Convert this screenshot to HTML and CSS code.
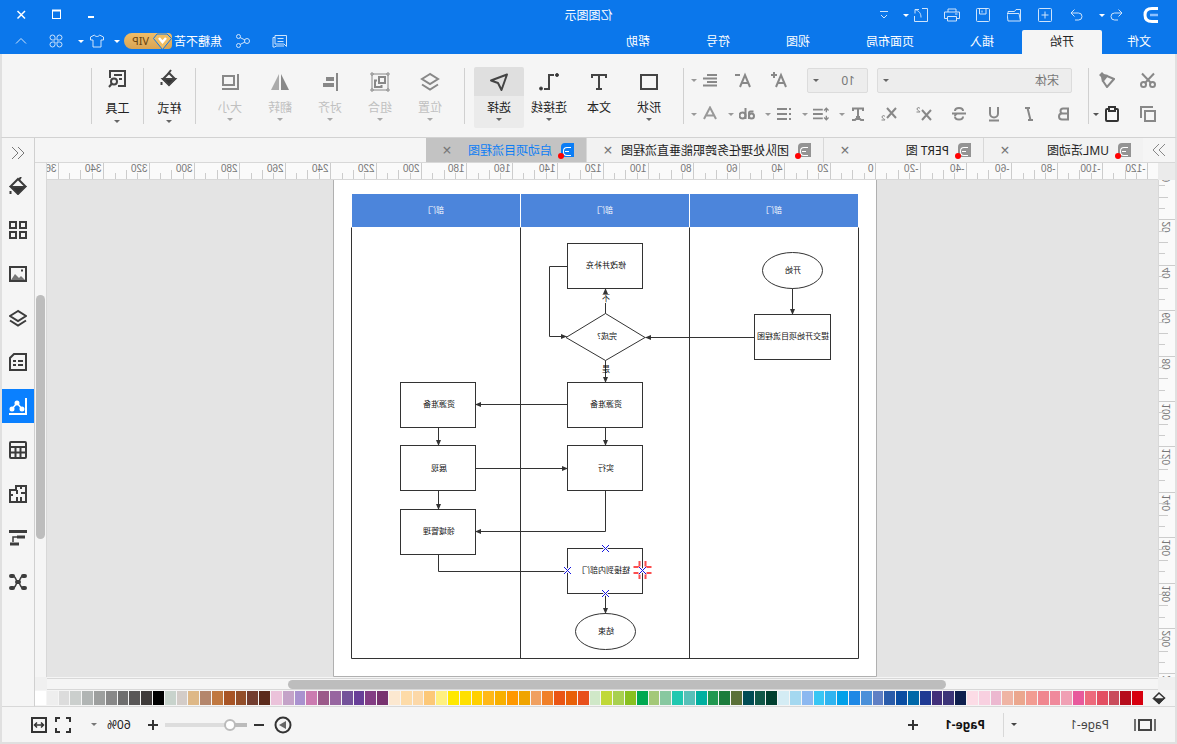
FILE: index.html
```
<!DOCTYPE html>
<html lang="zh-CN">
<head>
<meta charset="utf-8">
<title>亿图图示</title>
<link rel="stylesheet" href="styles.css">
</head>
<body>
<div class="app">
  <header class="header">
    <div class="titlebar">
      <div class="quick">
        <svg class="logo" width="18" height="18" viewBox="0 0 18 18" fill="none" stroke="#fff" stroke-width="3"><path d="M2 2.500h6c5 0 7 2 7 6.500s-2 6.500-7 6.500H2"/><path d="M2 9h8" stroke="#8cc0ff" stroke-width="2.500"/></svg>
        <button class="split" aria-label="撤销"><svg class="ic" viewBox="0 0 14 14"><path d="M5.500 1.500 2 5l3.500 3.500M2 5h7.500a3.500 3.500 0 0 1 0 7H6"/></svg><i class="caret"></i></button>
        <button class="qbtn" aria-label="重做"><svg class="ic" viewBox="0 0 14 14"><path d="M8.500 1.500 12 5 8.500 8.500M12 5H4.500a3.500 3.500 0 0 0 0 7H8"/></svg></button>
        <button class="qbtn" aria-label="新建"><svg class="ic" viewBox="0 0 14 14"><rect x=".5" y=".5" width="13" height="13" rx="1"/><path d="M7 3.500v7M3.500 7h7"/></svg></button>
        <button class="qbtn" aria-label="打开"><svg class="ic" viewBox="0 0 14 14"><path d="M.500 13V1.500h4.500l1.500 2H13V6M.500 13 2 5.500h12L13 13z"/></svg></button>
        <button class="qbtn" aria-label="保存"><svg class="ic" viewBox="0 0 14 14"><rect x=".5" y=".5" width="13" height="13" rx="1"/><path d="M4 1v5h6.500V1M8 2.500v2"/></svg></button>
        <button class="qbtn" aria-label="打印"><svg class="ic print" viewBox="0 0 16 14"><path d="M4 4V1h8v3M3.500 10.500H.500V4h15v6.500h-3"/><path d="M3.500 8.500h9V13h-9zM2.500 6H5"/></svg></button>
        <button class="split" aria-label="导出"><svg class="ic" viewBox="0 0 14 14"><path d="M6 .5H.500v13h13V8"/><path d="M9 1.500h4v4M13 1.500C9 3 7 5 7 9.500"/></svg><i class="caret"></i></button>
        <button class="more" aria-label="更多"><svg class="ic" width="8" height="8" viewBox="0 0 8 8"><path d="M0 .5h8M1 4l3 3 3-3"/></svg></button>
      </div>
      <h1 class="title">亿图图示</h1>
      <div class="winbtns">
        <button class="wbtn" aria-label="最小化"><svg class="ic win" viewBox="0 0 14 14"><path d="M4 9h6" stroke-width="2"/></svg></button>
        <button class="wbtn" aria-label="最大化"><svg class="ic win" viewBox="0 0 14 14"><rect x="2.500" y="2.500" width="8" height="8"/><path d="M2 2.500h9" stroke-width="2"/></svg></button>
        <button class="wbtn" aria-label="关闭"><svg class="ic win" viewBox="0 0 14 14"><path d="m3 3 7.500 7.500m0-7.500L3 10.500" stroke-width="1.500"/></svg></button>
      </div>
    </div>
    <div class="menubar">
      <nav class="menus">
        <button class="menu first">文件</button><button class="menu active">开始</button><button class="menu">插入</button><button class="menu">页面布局</button><button class="menu">视图</button><button class="menu">符号</button><button class="menu">帮助</button>
      </nav>
      <div class="account">
        <button class="abtn msg" aria-label="消息"><svg class="ic" width="16" height="14" viewBox="1 0 16 14"><path d="M2.500 1.500h11.500v8.500H5l-2.500 2.500zM14 3.500h2v9.500h-2l-1-1H5M5.500 4.500h6M5.500 7.500h6"/></svg></button>
        <button class="abtn share" aria-label="分享"><svg class="ic" viewBox="0 0 14 14"><circle cx="3" cy="7" r="2.500"/><circle cx="11.500" cy="2.500" r="2"/><circle cx="11.500" cy="11.500" r="2"/><path d="m5 6 5-2.500M5 8l5 2.500"/></svg></button>
        <span class="user">焦糖不苦</span>
        <button class="vip"><svg width="19" height="17" viewBox="0 0 19 17"><path d="M5 1h10l3.500 4.500L9.500 16.500.500 5.500z" fill="#f0bd62" stroke="#0b77eb"/><path d="m6 5 3.500 4L13 5" fill="none" stroke="#fff" stroke-width="2.500"/></svg><span>VIP</span></button>
        <i class="caret acc"></i>
        <button class="abtn skin" aria-label="皮肤"><svg class="ic" viewBox="0 0 14 14"><path d="M4.500 1C5 3 9 3 9.500 1L13.500 3v3h-2.500v7H3V6H.500V3z"/></svg><i class="caret"></i></button>
        <button class="wbtn" aria-label="应用"><svg class="ic" viewBox="0 0 14 14"><path d="M6 6H3.500a2.500 2.500 0 1 1 2.500-2.500zm2 0V3.500A2.500 2.500 0 1 1 10.500 6zM6 8v2.500A2.500 2.500 0 1 1 3.500 8zm2 0h2.500A2.500 2.500 0 1 1 8 10.500z"/></svg></button>
        <button class="wbtn" aria-label="收起"><svg class="ic" viewBox="0 0 14 14"><path d="m2 9.500 5-5 5 5"/></svg></button>
      </div>
    </div>
  </header>

  <section class="ribbon">
    <div class="clip">
      <button class="tool" aria-label="剪切"><svg class="ri" viewBox="0 0 16 16"><circle cx="3.500" cy="12.500" r="2.500"/><circle cx="12.500" cy="12.500" r="2.500"/><path d="M2 1.500 11 11M14 1.500 5 11"/></svg></button>
      <button class="tool" aria-label="格式刷"><svg class="ri" viewBox="0 0 16 16"><path d="M1 7 8 4l4 5-4 6z"/><path d="m7 3 4-1 2-2 3 3-2 2-1 5z" fill="#888" stroke="none"/></svg></button>
      <button class="tool" aria-label="复制"><svg class="ri" viewBox="0 0 16 16"><rect x="1" y="5" width="10" height="10"/><path d="M3 1h12v11" /></svg></button>
      <button class="tool dark" aria-label="粘贴"><svg class="ri" viewBox="0 0 16 16"><rect x="2" y="3" width="12" height="12" rx="1"/><rect x="5" y="1" width="6" height="4" fill="#f5f5f5"/></svg><i class="caret"></i></button>
    </div>
    <div class="sep"></div>
    <div class="fontbox">
      <div class="frow">
        <label class="pick family"><select aria-label="字体"><option>宋体</option></select><i class="caret"></i></label>
        <label class="pick size"><select aria-label="字号"><option>10</option></select><i class="caret"></i></label>
        <button class="tool grow" aria-label="增大字号"><svg class="ri" viewBox="0 0 16 16"><path d="M1 15 6 3l5 12M3 11h6M13 0v6M10 3h6"/></svg></button>
        <button class="tool shrink" aria-label="减小字号"><svg class="ri" viewBox="0 0 16 16"><path d="M1 15 6 3l5 12M3 11h6M11 3h5"/></svg></button>
        <button class="tool wide align" aria-label="对齐"><svg class="ri" viewBox="0 0 16 16"><path d="M1 3h10M1 6.500h14M1 10h10M1 13.500h14"/></svg><i class="caret"></i></button>
      </div>
      <div class="frow styles">
        <button class="tool" aria-label="加粗"><svg class="ri" viewBox="0 0 16 16"><path d="M4 2.500h5a2.500 2.500 0 0 1 0 5H4zM4 7.500h6a3 3 0 0 1 0 6H4z"/></svg></button>
        <button class="tool" aria-label="斜体"><svg class="ri" viewBox="0 0 16 16"><path d="M7 2h5M4 14h5M9.500 2l-3 12"/></svg></button>
        <button class="tool" aria-label="下划线"><svg class="ri" viewBox="0 0 16 16"><path d="M4 1v6.500a4 4 0 0 0 8 0V1M3 14.500h10"/></svg></button>
        <button class="tool" aria-label="删除线"><svg class="ri" viewBox="0 0 16 16"><path d="M12 5C12 1 4 1 4 5M4 10.500c0 4 8 4 8 0M1 7.500h14M12 10c0-1-1-2-2-2.500"/></svg></button>
        <button class="tool" aria-label="上标"><svg class="ri" viewBox="0 0 16 16"><path d="m1 4 9 10M10 4 1 14"/><path d="M12 2.500c1-1.500 3-1 3 .5S12 5 12 6h3.500" stroke-width="1"/></svg></button>
        <button class="tool" aria-label="下标"><svg class="ri" viewBox="0 0 16 16"><path d="m1 2 9 10M10 2 1 12"/><path d="M12 10.500c1-1.500 3-1 3 .5s-3 2-3 3h3.500" stroke-width="1"/></svg></button>
        <div class="splits">
          <button class="tool wide" aria-label="文本格式"><svg class="ri" viewBox="0 0 16 16"><path d="M3 5V2.500h10V5M8 2.500V11M6 11h4M2 14h3l1-1h4l1 1h3"/></svg><i class="caret"></i></button>
          <button class="tool wide" aria-label="行距"><svg class="ri" viewBox="0 0 18 16"><path d="M7 3h11M7 8h11M7 13h11"/><path d="M3 1v5M3 10v5M.500 4 3 1.500 5.500 4M.500 12 3 14.500 5.500 12" stroke-width="1.500"/></svg><i class="caret"></i></button>
          <button class="tool wide" aria-label="项目符号"><svg class="ri" viewBox="0 0 16 16"><path d="M5 3h10M5 8h10M5 13h10M1 3h2M1 8h2M1 13h2"/></svg><i class="caret"></i></button>
          <button class="tool wide" aria-label="突出显示"><svg class="ri" viewBox="0 0 16 16"><circle cx="3.500" cy="10" r="2.500"/><path d="M1.500 5.500h3a1.500 1.500 0 0 1 1.500 1.500v6M9.500 2v11"/><circle cx="12.500" cy="9.500" r="3"/></svg><i class="caret"></i></button>
          <button class="tool wide light" aria-label="文字颜色"><svg class="ri" viewBox="0 0 16 16"><path d="M2 13 8 1.500 14 13M4.500 9.500h7"/></svg><i class="caret"></i></button>
        </div>
      </div>
    </div>
    <div class="sep"></div>
    <div class="bigs">
      <button class="big"><svg class="bi" viewBox="0 0 20 20"><rect x="2" y="3" width="16" height="14"/></svg>形状<i class="caret"></i></button>
      <button class="big"><svg class="bi" viewBox="0 0 20 20"><path d="M3 6V3h14v3M10 3v14M7 17h6"/></svg>文本</button>
      <button class="big"><svg class="bi" viewBox="0 0 20 20"><path d="M5 3h5v14h5"/><circle cx="2" cy="3" r="1.500" fill="#333" stroke-width="1"/><circle cx="18" cy="16.500" r="1.500" fill="#333" stroke-width="1"/></svg>连接线<i class="caret"></i></button>
      <button class="big on"><svg class="bi" viewBox="0 0 20 20"><path d="m2 2.500 16 6-7 2.500-3.500 7z" stroke-linejoin="round"/></svg>选择<i class="caret"></i></button>
    </div>
    <div class="sep"></div>
    <div class="bigs off">
      <button class="big"><svg class="bi" viewBox="0 0 20 20"><path d="m10 2 8 5-8 5-8-5zM2 12.500l8 5 8-5"/></svg>位置<i class="caret"></i></button>
      <button class="big"><svg class="bi" viewBox="0 0 20 20"><path d="M2 2h16v16H2z" stroke-width="1"/><rect x="5" y="5" width="6" height="6"/><path d="M13 8.500h2v6.500H8.500v-2"/><path d="M1 1h2v2H1zM17 1h2v2h-2zM1 17h2v2H1zM17 17h2v2h-2z" stroke-width="1" fill="#f5f5f5"/></svg>组合<i class="caret"></i></button>
      <button class="big"><svg class="bi" viewBox="0 0 20 20"><path d="M3 1v18"/><path d="M6 7h8M6 13h11" stroke-width="4"/></svg>对齐<i class="caret"></i></button>
      <button class="big"><svg class="bi" viewBox="0 0 20 20"><path d="M9 2v16H1z" fill="#888" stroke="none"/><path d="M11 2v16h8z" fill="#aaa" stroke="none"/></svg>翻转<i class="caret"></i></button>
      <button class="big"><svg class="bi" viewBox="0 0 20 20"><rect x="6" y="4" width="11" height="9"/><path d="M2 2v15h16"/></svg>大小<i class="caret"></i></button>
    </div>
    <div class="sep"></div>
    <button class="big last"><svg class="bi" viewBox="0 0 20 20"><path d="m4 10 6-6 6 6-6 5.500z"/><path d="M4 10h12l-6 6z" fill="#333"/><path d="M11 5 8 1M17.500 13v3"/></svg>样式<i class="caret"></i></button>
    <div class="sep"></div>
    <button class="big last"><svg class="bi" viewBox="0 0 20 20"><path d="M9 17H2V2h15v7M5 6h8M5 10h3"/><circle cx="13" cy="12.500" r="3"/><path d="m15 14.500 3 3.500"/></svg>工具<i class="caret"></i></button>
    <div class="sep"></div>
  </section>

  <main class="work">
    <section class="editor">
      <div class="docs">
        <button class="expand" aria-label="展开"><svg class="ic" viewBox="0 0 14 14"><path d="m1 1 6 6-6 6M7 1l6 6-6 6"/></svg></button>
        <div class="doc"><i class="fi"></i><span>UML活动图</span><button aria-label="关闭标签">×</button></div>
        <div class="doc"><i class="fi"></i><span>PERT 图</span><button aria-label="关闭标签">×</button></div>
        <div class="doc"><i class="fi"></i><span>团队处理任务跨职能垂直流程图</span><button aria-label="关闭标签">×</button></div>
        <div class="doc current"><i class="fi"></i><span>启动项目流程图</span><button aria-label="关闭标签">×</button></div>
      </div>
      <div class="stage">
        <div class="corner"></div>
        <svg class="hruler" id="hruler" height="17"></svg>
        <div class="vscroll"><div class="vthumb"></div></div>
        <svg class="vruler" id="vruler" width="17"></svg>
        <div class="canvas">
          <svg class="page" width="544" height="497" viewBox="0 0 544 497">
            <defs><marker id="arr" viewBox="0 0 6 6" refX="5.500" refY="3" markerWidth="6" markerHeight="6" orient="auto" markerUnits="userSpaceOnUse"><path d="M0 .500 6 3 0 5.500z" fill="#333"/></marker></defs>
            <path d="M.500 0v496.500h543V0" fill="#fff" stroke="#b0b0b0"/>
            <path d="M19 14h506v33H19z" fill="#4c85db"/>
            <path d="M187.500 14v33M356.500 14v33" stroke="#fff"/>
            <path class="ln" d="M18.500 47.500V478.500H525.500V47.500M187.500 47.500v431M356.500 47.500v431"/>
            <g class="ln">
              <ellipse cx="84.500" cy="90.500" rx="30" ry="18"/>
              <rect x="46.500" y="134.500" width="76" height="45"/>
              <rect x="234.500" y="63.500" width="75" height="45"/>
              <path d="m232 157.500 39.500-24 39.500 24-39.500 23z"/>
              <rect x="234.500" y="202.500" width="75" height="45"/>
              <rect x="234.500" y="265.500" width="75" height="45"/>
              <rect x="401.500" y="202.500" width="75" height="45"/>
              <rect x="401.500" y="265.500" width="75" height="45"/>
              <rect x="401.500" y="329.500" width="75" height="45"/>
              <rect x="234.500" y="368.500" width="75" height="45"/>
              <ellipse cx="271.500" cy="451.500" rx="30" ry="18"/>
              <path d="M438.500 374.500v17h-129"/>
            </g>
            <g class="ln">
              <path d="M84.500 108.500v26" marker-end="url(#arr)"/><path d="M122.500 157.500h109" marker-end="url(#arr)"/>
              <path d="M271.500 133.500v-25" marker-end="url(#arr)"/><path d="M309.500 86.500h18v70h-17" marker-end="url(#arr)"/>
              <path d="M271.500 180.500v22" marker-end="url(#arr)"/><path d="M309.500 224.500h92" marker-end="url(#arr)"/>
              <path d="M271.500 247.500v18" marker-end="url(#arr)"/><path d="M438.500 247.500v18" marker-end="url(#arr)"/>
              <path d="M438.500 310.500v19" marker-end="url(#arr)"/><path d="M401.500 288.500h-92" marker-end="url(#arr)"/>
              <path d="M271.500 310.500v41h130" marker-end="url(#arr)"/><path d="M271.500 413.500v20" marker-end="url(#arr)"/>
            </g>
            <path d="M267 114h9v9h-9z" fill="#fff"/>
            <g class="t white"><text x="103" y="33">部门</text><text x="272" y="33">部门</text><text x="441" y="33">部门</text></g>
            <g class="t">
              <text x="84" y="93">开始</text><text x="84" y="159">提交开始项目流程图</text><text x="271" y="88">修改并补充</text>
              <text x="271" y="121">不</text><text x="270" y="159">完成?</text><text x="271" y="192">是</text>
              <text x="271" y="227">资源准备</text><text x="438" y="227">资源准备</text><text x="271" y="291">实行</text>
              <text x="438" y="291">展现</text><text x="438" y="354">领域管理</text><text x="271" y="393">链接到内部门</text><text x="271" y="454">结束</text>
            </g>
            <path d="M231.500 381v6h-6M237.500 381v6h6M231.500 399v-6h-6M237.500 399v-6h6" fill="none" stroke="#fb4f4f" stroke-width="2"/>
            <path d="m268 365 7 7m0-7-7 7M306 387l7 7m0-7-7 7M268 410l7 7m0-7-7 7M231 387l7 7m0-7-7 7" stroke="#fff" stroke-width="3"/>
            <path d="m268 365 7 7m0-7-7 7M306 387l7 7m0-7-7 7M268 410l7 7m0-7-7 7M231 387l7 7m0-7-7 7" stroke="#1414e0"/>
          </svg>
        </div>
        <div class="corner low"></div>
        <div class="hscroll"><div class="hthumb"></div></div>
        <div class="corner low"></div>
      </div>
      <div class="palette">
        <button class="fill" aria-label="填充"><svg width="14" height="14" viewBox="0 0 14 14" fill="none" stroke="#333" stroke-width="1.500"><path d="m1.500 7 5.500-5 5 5-5 5z"/><path d="M3 8h9l-5 4.500z" fill="#333"/></svg></button>
        <div class="swatches" id="swatches"></div>
      </div>
    </section>
    <aside class="side">
      <button class="sbtn slim" aria-label="折叠"><svg class="si thin" viewBox="0 0 18 18"><path d="M9 3 3 9l6 6M15 3 9 9l6 6"/></svg></button>
      <button class="sbtn" aria-label="样式"><svg class="si" viewBox="0 0 18 18"><path d="m2 9 7-7 7 7-7 7z"/><path d="M2 10h14l-7 7z" fill="#333"/><path d="M8 3 6 0M16.500 14v3"/></svg></button>
      <button class="sbtn" aria-label="符号库"><svg class="si" viewBox="0 0 18 18"><path d="M1 1h6v6H1zM11 1h6v6h-6zM1 11h6v6H1zM11 11h6v6h-6z"/></svg></button>
      <button class="sbtn" aria-label="图片"><svg class="si" viewBox="0 0 18 18"><rect x="1" y="2" width="16" height="14"/><path d="m2 15 4-4 2 2 4-4 4 6z" fill="#777" stroke="none"/><path d="M4 5.500h2"/></svg></button>
      <button class="sbtn" aria-label="图层"><svg class="si" viewBox="0 0 18 18"><path d="m9 2 8 5-8 5-8-5zM1 11.500l8 5 8-5"/></svg></button>
      <button class="sbtn" aria-label="备注"><svg class="si" viewBox="0 0 18 18"><path d="M1 1h12l4 4v12H1zM4 8h5m2 0h3M4 12h5m2 0h3"/></svg></button>
      <button class="sbtn on" aria-label="图表"><svg class="si" viewBox="0 0 18 18"><path d="M1 1v16h17"/><path d="m5 12 5-6 5 6" stroke-width="1.500"/><circle cx="5" cy="12" r="1.500" fill="#fff"/><circle cx="10" cy="6" r="1.500" fill="#fff"/><circle cx="15" cy="12" r="1.500" fill="#fff"/></svg></button>
      <button class="sbtn" aria-label="表格"><svg class="si" viewBox="0 0 18 18"><rect x="1" y="1" width="16" height="16" rx="1"/><path d="M1 6h16M1 11.500h16M6.500 6v11M11.500 6v11"/></svg></button>
      <button class="sbtn" aria-label="平面图"><svg class="si" viewBox="0 0 18 18"><path d="M1 1h10v4h6v12H1zM1 8h5M6 1v3M6 12v5M10 17v-5M14 10h3M10 5v4"/></svg></button>
      <button class="sbtn" aria-label="甘特图"><svg class="si" viewBox="0 0 18 18"><path d="M0 2.500h18" stroke-width="3"/><path d="M2 8h8M8 15h9" stroke-width="3"/><path d="M10 8h4v5" stroke-width="1.500"/></svg></button>
      <button class="sbtn" aria-label="思维导图"><svg class="si" viewBox="0 0 18 18"><path d="M4 3c3 0 3 6 5 6s2-6 5-6M4 15c3 0 3-6 5-6s2 6 5 6" stroke-width="1.500"/><path d="M2 3h2M14 3h2M2 15h2M14 15h2M8 9h2" stroke-width="4" stroke-linecap="round"/></svg></button>
    </aside>
  </main>

  <footer class="status">
    <button class="tool dark pages" aria-label="页面列表"><svg width="22" height="14" viewBox="0 0 22 14" fill="none" stroke="#444" stroke-width="2"><rect x="5" y="2" width="12" height="10"/><path d="M1 1v12M21 1v12" stroke-width="1.500"/></svg></button>
    <button class="pagesel">Page-1<i class="caret"></i></button>
    <button class="pagetab">Page-1</button>
    <button class="tool dark" aria-label="添加页面"><svg class="pm" viewBox="0 0 10 10"><path d="M0 5h10M5 0v10"/></svg></button>
    <div class="zoom">
      <button class="tool" aria-label="播放"><svg width="18" height="18" viewBox="0 0 18 18"><circle cx="9" cy="9" r="7.500" fill="none" stroke="#333" stroke-width="2"/><path d="m6 5 7 4-7 4z" fill="#666"/></svg></button>
      <button class="tool minus" aria-label="缩小"><svg class="pm" viewBox="0 0 10 10"><path d="M0 5h10"/></svg></button>
      <input class="slider" type="range" min="0" max="100" value="16" aria-label="缩放">
      <button class="tool plus" aria-label="放大"><svg class="pm" viewBox="0 0 10 10"><path d="M0 5h10M5 0v10"/></svg></button>
      <button class="percent">60%<i class="caret"></i></button>
      <button class="tool" aria-label="全屏"><svg class="ri fs" viewBox="0 0 16 16"><path d="M1 5V1h4M11 1h4v4M15 11v4h-4M5 15H1v-4"/></svg></button>
      <button class="tool" aria-label="适合宽度"><svg class="ri fs" viewBox="0 0 16 16"><rect x="1" y="1" width="14" height="14"/><path d="M3.500 8h9M6 5.500 3.500 8 6 10.500M10 5.500 12.500 8 10 10.500" stroke-width="1.500"/></svg></button>
    </div>
  </footer>
</div>
<script src="app.js"></script>
</body>
</html>
```

FILE: styles.css
```
* { box-sizing: border-box; }
html, body { margin: 0; height: 100%; overflow: hidden; }
body, button, select, input { font-family: "Noto Sans", "Noto Sans CJK SC", sans-serif; font-size: 12px; color: #222; }
button { border: 0; padding: 0; background: none; }
svg { display: block; flex: none; }

/* mirrored workspace */
.app { height: 100vh; display: flex; flex-direction: column; background: #f5f5f5; border-bottom: 2px solid #e0e0e0; transform: scaleX(-1); }

.caret { display: block; flex: none; width: 0; height: 0; border: 3px solid transparent; border-top-color: currentColor; border-bottom: 0; }

.header { background: #0b77eb; color: #fff; }
.header button { color: #fff; }
.ic { width: 14px; height: 14px; fill: none; stroke: #cfe4fb; stroke-width: 1; }
.ic.win { stroke: #fff; }
.ic.print { width: 16px; }
.titlebar { height: 30px; display: grid; grid-template-columns: 1fr auto 1fr; align-items: center; }
.quick { display: flex; align-items: center; padding-left: 17px; }
.logo { margin-right: 9px; }
.split { display: flex; align-items: center; gap: 5px; width: 41px; height: 24px; padding-left: 9px; }
.qbtn { width: 31px; height: 24px; display: grid; place-items: center; }
.more { width: 24px; display: grid; place-items: center; }
.more .ic { width: 8px; height: 8px; }
.title { margin: 0; font-size: 12px; font-weight: 400; }
.winbtns { display: flex; justify-content: flex-end; padding-right: 4px; }
.wbtn { width: 35px; height: 24px; display: grid; place-items: center; }

.menubar { height: 24px; display: flex; justify-content: space-between; }
.menus { display: flex; }
.menu { padding: 0 28px; height: 24px; line-height: 24px; }
.menu.first { padding: 0 25px 0 26px; }
.header .menu.active { background: #f5f5f5; color: #222; border-radius: 2px 2px 0 0; }
.account { display: flex; align-items: center; height: 22px; padding-right: 4px; }
.abtn { display: flex; align-items: center; gap: 6px; }
.msg { margin-right: 22px; }
.msg .ic { width: 16px; }
.share { margin-right: 14px; }
.user { margin-right: 2px; }
.header .vip { display: flex; align-items: center; width: 48px; height: 16px; border-radius: 4px 8px 8px 4px; background: linear-gradient(#efbd68, #d9a454); font-size: 11px; line-height: 16px; color: #6b4410; gap: 4px; }
.acc { margin: 0 10px 0 4px; }
.skin { margin-right: 4px; }

.ribbon { display: flex; flex: none; height: 84px; padding: 13px 0 0 12px; border: 2px solid #e0e0e0; border-top: 0; border-bottom: 1px solid #d2d2d2; }
.sep { flex: none; width: 1px; height: 56px; margin-top: 1px; background: #d0d0d0; }
.tool { display: flex; align-items: center; justify-content: center; height: 24px; gap: 5px; color: #999; }
.ri { width: 16px; height: 16px; fill: none; stroke: #888; stroke-width: 2; }
.dark { color: #555; }
.dark .ri { stroke: #333; }
.light .ri { stroke: #999; }
.clip { display: grid; grid-template-columns: 30px 36px; grid-auto-rows: 24px; gap: 10px 8px; padding-top: 1px; }
.fontbox { display: flex; flex-direction: column; gap: 10px; padding: 1px 7px 0 16px; }
.frow { display: flex; align-items: center; height: 24px; }
.styles { gap: 19px; }
.splits { display: flex; gap: 10px; margin-left: -4px; }
.wide { width: 27px; }
.pick { position: relative; display: block; color: #666; }
.pick select { width: 100%; height: 25px; border: 1px solid #dcdcdc; border-radius: 2px; background: #ededed; appearance: none; color: #777; padding: 0 12px; }
.pick .caret { position: absolute; right: 6px; top: 11px; }
.family { width: 195px; margin-right: 9px; }
.size { width: 61px; }
.grow { margin-left: 20px; }
.shrink { margin-left: 20px; }
.align { margin-left: 17px; }
.bigs { display: flex; padding: 0 9px; }
.big { width: 50px; height: 61px; display: flex; flex-direction: column; align-items: center; padding-top: 5px; line-height: 18px; border-radius: 2px; flex: none; }
.big .caret { color: #666; margin-top: 1px; }
.bi { width: 20px; height: 20px; margin-bottom: 7px; fill: none; stroke: #444; stroke-width: 2; }
.on.big { background: linear-gradient(#dfdfdf 29px, #ebebeb 29px); }
.off .big { color: #c0c0c0; }
.off .caret { color: #aaa; }
.off .bi { stroke: #888; }
.last { padding-top: 2px; width: 51px; }
.last .bi { margin-bottom: 11px; }
.last .caret { margin-top: 2px; }

.work { flex: 1; min-height: 0; display: flex; border-left: 2px solid #e0e0e0; border-right: 2px solid #e0e0e0; }
.editor { flex: 1; min-width: 0; display: flex; flex-direction: column; }
.docs { display: flex; height: 25px; flex: none; border-bottom: 1px solid #d8d8d8; }
.expand { width: 32px; display: grid; place-items: center; }
.expand .ic { stroke: #888; }
.doc { display: flex; align-items: center; min-width: 160px; background: #f2f2f2; border-right: 1px solid #d8d8d8; padding: 0 14px 0 12px; }
.doc span { margin: 0 6px 0 9px; }
.doc button { margin-left: auto; width: 14px; font-size: 16px; line-height: 20px; color: #777; }
.doc.current { background: #c3c3c3; color: #0b7df5; border-right: 0; }
.fi { position: relative; flex: none; width: 13px; height: 14px; border-radius: 0 4px 0 0; background: #939393; }
.fi::before { content: ""; position: absolute; left: 3px; top: 4px; width: 7px; height: 7px; border: 1px solid #fff; border-left: 0; border-radius: 0 4px 4px 0; background: linear-gradient(#fff, #fff) center / 4px 1px no-repeat; }
.fi::after { content: ""; position: absolute; right: -3px; bottom: -2px; width: 6px; height: 6px; border-radius: 50%; background: #f00; }
.current .fi { background: #0b7df5; }

.stage { flex: 1; min-height: 0; display: grid; grid-template-columns: 17px 1fr 12px; grid-template-rows: 17px 1fr 13px; }
.corner { background: #ebebeb; }
.low { background: #f0f0f0; }
.hruler, .vruler { background: #fafafa; overflow: hidden; fill: #777; font: 10px "Liberation Sans", sans-serif; }
.hruler { width: 100%; border-bottom: 1px solid #d8d8d8; }
.vruler { height: 100%; border-right: 1px solid #d8d8d8; }
.tick { stroke: #ccc; }
.canvas { background: #e4e4e4; overflow: hidden; min-height: 0; }
.page { margin-left: 281px; }
.ln { fill: none; stroke: #333; }
.t { font: 8px "Noto Sans CJK SC", sans-serif; fill: #111; text-anchor: middle; }
.white { fill: #fff; }
.vscroll { grid-row: span 2; border-left: 1px solid #d8d8d8; padding: 132px 1px 0; }
.vthumb { height: 244px; border-radius: 5px; background: #bdbdbd; }
.hscroll { border: 1px solid #d8d8d8; border-width: 1px 0; padding: 1px 241px 1px 212px; margin-top: 1px; }
.hthumb { height: 9px; border-radius: 5px; background: #bdbdbd; }
.palette { display: flex; align-items: center; height: 17px; flex: none; border-bottom: 1px solid #d8d8d8; }
.fill { width: 32px; display: grid; place-items: center; }
.swatches { flex: 1; display: flex; gap: 1px; height: 14px; }
.swatch { flex: 1; }

.side { width: 33px; flex: none; border-left: 1px solid #d0d0d0; border-bottom: 1px solid #d8d8d8; display: flex; flex-direction: column; gap: 10px; }
.sbtn { height: 34px; display: grid; place-items: center; flex: none; }
.slim { height: 21px; margin-top: 4px; margin-bottom: -4px; }
.si { width: 18px; height: 18px; fill: none; stroke: #3c3c3c; stroke-width: 2; }
.thin { stroke: #777; stroke-width: 1; }
.sbtn.on { background: #0a80ff; }
.on .si { stroke: #fff; }

.status { flex: none; height: 35px; display: flex; align-items: center; border: 2px solid #e0e0e0; border-width: 0 2px; padding: 0 29px 0 19px; }
.pagesel { display: flex; align-items: center; justify-content: space-between; width: 106px; height: 24px; margin-left: 25px; padding-right: 7px; border-right: 1px solid #d8d8d8; color: #444; }
.pagetab { margin: 0 27px 0 18px; font-weight: 700; color: #111; }
.pm { width: 10px; height: 10px; stroke: #333; stroke-width: 2; }
.zoom { margin-left: auto; display: flex; align-items: center; }
.plus { margin: 0 17px 0 7px; }
.slider { appearance: none; width: 82px; height: 12px; margin: 0; background: linear-gradient(90deg, #bbb 16%, #ddd 16%) center / 100% 4px no-repeat; }
.slider::-webkit-slider-thumb { appearance: none; width: 12px; height: 12px; border: 2px solid #bbb; border-radius: 50%; background: #fff; }
.percent { display: flex; align-items: center; gap: 10px; margin-right: 20px; }
.percent .caret { color: #777; }
.zoom .tool + .tool { margin-left: 8px; }
.zoom .minus.tool { margin: 0 7px 0 10px; }
.fs { stroke: #333; }
```

FILE: app.js
```
const NS = "http://www.w3.org/2000/svg";
const STEP = 45.4;

function add(parent, tag, attrs, text) {
  const el = document.createElementNS(NS, tag);
  for (const key in attrs) el.setAttribute(key, attrs[key]);
  if (text !== undefined) el.textContent = text;
  parent.appendChild(el);
}

function ruler(id, zero, from, to, vertical) {
  const svg = document.getElementById(id);
  for (let i = from * 4; i <= to * 4; i++) {
    const pos = Math.round(zero + i * STEP / 4) + 0.5;
    const start = i % 4 === 0 ? 0 : i % 2 === 0 ? 7 : 10;
    add(svg, "path", { class: "tick", d: vertical ? `M${start} ${pos}H17` : `M${pos} ${start}V17` });
    if (i % 4 === 0) {
      add(svg, "text", { transform: vertical ? `translate(5 ${pos + 2}) rotate(90)` : `translate(${pos + 2} 9)` }, i * 5);
    }
  }
}

ruler("hruler", 282, -6, 18, false);
ruler("vruler", -6, 0, 11, true);

const colors = `d7000f b60c1c c94c5c e34f62 ed6a7c e85a9c f0a0b4 f08a9c f08790 f29c92 eba78e efb4a4 ecb8d0 f8d0e0 fcdce6
0f1f4e 3c3478 42307a 1f3a93 0068a8 0a4da2 2a5caa 6080c4 4a90d9 1e88e5 00a0e9 2fb4f0 38c6f4 8cb8f0 a4d8f0 d4ecf4
004030 105848 004c54 5a7038 1c7c3c 209850 00b0a0 58c0b8 20c8b0 88c8a0 a4c878 00a850 88c020 a8d050 c0d838 d0e8c8
e8501c e86008 ea5514 f08028 f0a060 f0a400 ff9800 f8b000 ffb818 ffd000 ffe000 ffe800 fff080 fcc878 fcd8a8 fddba8 fce8d0
77326f 833d84 683f98 74529a 9766a0 9b5a8a cb7bb0 a992cf c4a3c8 ebc2da
5b2a1b 733d2f 934f2a a85526 c07840 b4866c deb887 d3ccc8 c8d3cc
000000 3e3a39 595757 6e6e6e 888888 9d9f9e b1b5b4 cbcfcd dcdcdc eeeeee ffffff`.split(/\s+/);
const box = document.getElementById("swatches");
for (const color of colors) {
  const swatch = document.createElement("span");
  swatch.className = "swatch";
  swatch.style.background = "#" + color;
  box.appendChild(swatch);
}
```
